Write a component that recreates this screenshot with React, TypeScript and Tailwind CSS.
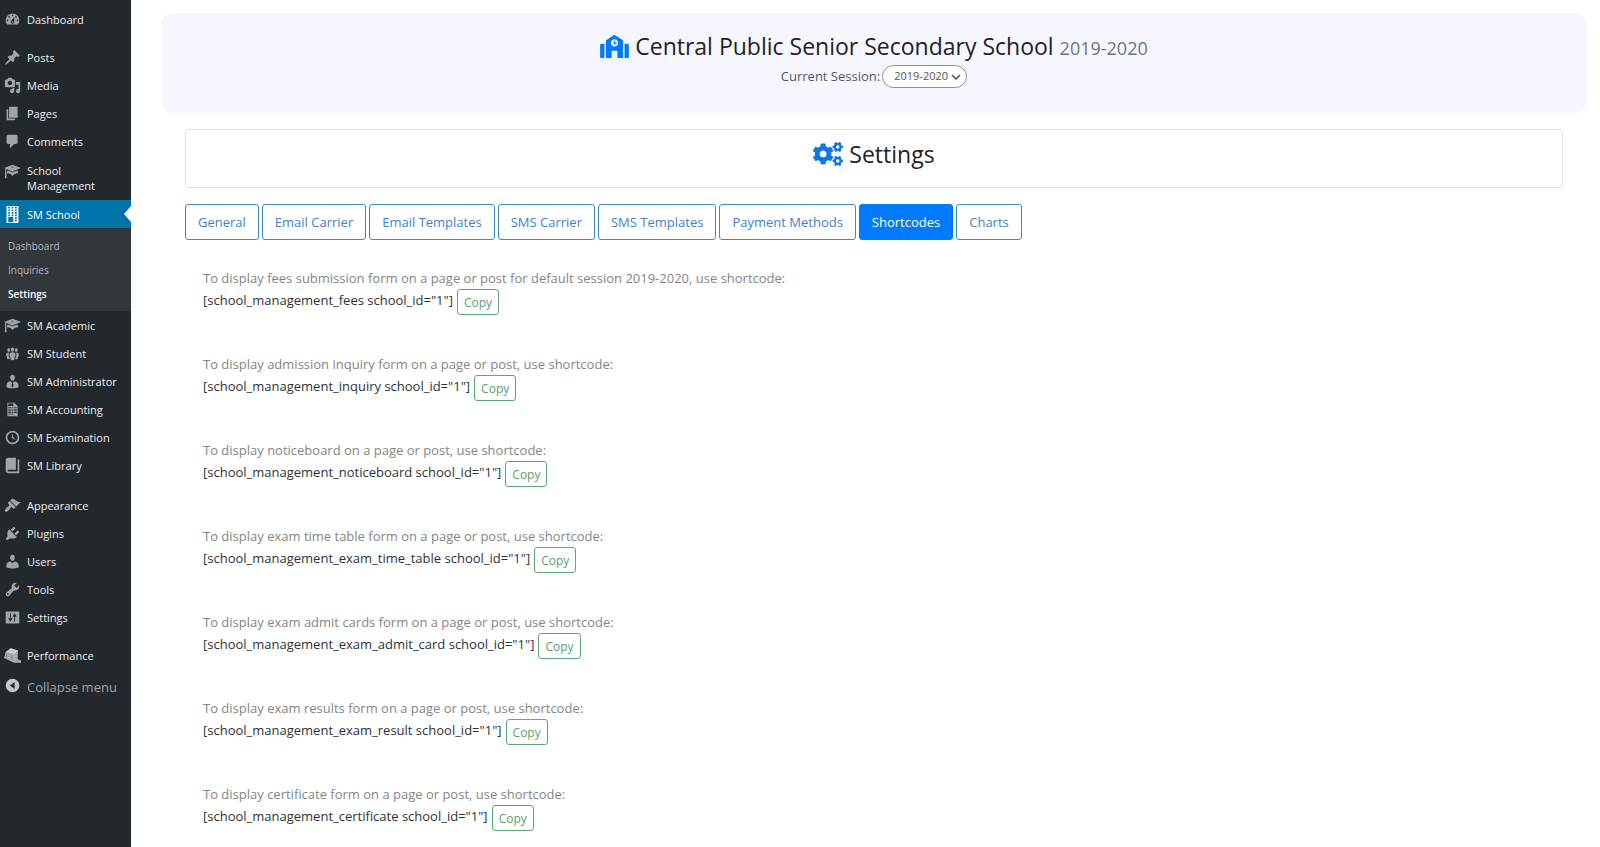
import { useState } from "react";
import { FaSchool, FaCogs } from "react-icons/fa";

type MenuItem = { label: string; icon: string };

// 20x20 admin menu glyphs
const icons: Record<string, string> = {
  dashboard:
    "M3.76 16h12.48c1.1-1.37 1.76-3.11 1.76-5 0-4.42-3.58-8-8-8s-8 3.58-8 8c0 1.89.66 3.63 1.76 5zM10 4c.55 0 1 .45 1 1s-.45 1-1 1-1-.45-1-1 .45-1 1-1zM6 6c.55 0 1 .45 1 1s-.45 1-1 1-1-.45-1-1 .45-1 1-1zm8 0c.55 0 1 .45 1 1s-.45 1-1 1-1-.45-1-1 .45-1 1-1zm-5.37 5.55L12 7v6c0 1.1-.9 2-2 2s-2-.9-2-2c0-.57.24-1.08.63-1.45zM4 10c.55 0 1 .45 1 1s-.45 1-1 1-1-.45-1-1 .45-1 1-1zm12 0c.55 0 1 .45 1 1s-.45 1-1 1-1-.45-1-1 .45-1 1-1zm-5 3c0-.55-.45-1-1-1s-1 .45-1 1 .45 1 1 1 1-.45 1-1z",
  post: "M10.44 3.02l1.82-1.82 6.36 6.35-1.83 1.82c-1.05-.68-2.48-.57-3.41.36l-.75.75c-.92.93-1.04 2.35-.35 3.41l-1.83 1.82-2.41-2.41-2.8 2.79c-.42.42-3.38 2.71-3.8 2.29s1.86-3.39 2.28-3.81l2.79-2.79L4.1 9.36l1.83-1.82c1.05.69 2.48.57 3.4-.36l.75-.75c.93-.92 1.05-2.35.36-3.41z",
  media:
    "M13 11V4c0-.55-.45-1-1-1h-1.67L9 1H5L3.67 3H2c-.55 0-1 .45-1 1v7c0 .55.45 1 1 1h10c.55 0 1-.45 1-1zM7 4.5c1.38 0 2.5 1.12 2.5 2.5S8.38 9.5 7 9.5 4.5 8.38 4.5 7 5.62 4.5 7 4.5zM14 6h5v10.5c0 1.38-1.12 2.5-2.5 2.5S14 17.88 14 16.5s1.12-2.5 2.5-2.5c.17 0 .34.02.5.05V9h-3V6zm-4 8.05V13h2v3.5c0 1.38-1.12 2.5-2.5 2.5S7 17.88 7 16.5 8.12 14 9.5 14c.17 0 .34.02.5.05z",
  page: "M6 15V2h10v13H6zm-1 1h8v2H3V5h2v11z",
  comments:
    "M5 2h9c1.1 0 2 .9 2 2v7c0 1.1-.9 2-2 2h-2l-5 5v-5H5c-1.1 0-2-.9-2-2V4c0-1.1.9-2 2-2z",
  learn:
    "M10 10L2.54 7.02 3 18H1l.48-11.41L0 6l10-4 10 4zm0-5c-.55 0-1 .22-1 .5s.45.5 1 .5 1-.22 1-.5-.45-.5-1-.5zm0 6l5.57-2.23c.71.94 1.2 2.07 1.36 3.3-.3-.04-.61-.07-.93-.07-2.55 0-4.78 1.37-6 3.41C8.78 13.37 6.55 12 4 12c-.32 0-.63.03-.93.07.16-1.23.65-2.36 1.36-3.3z",
  building:
    "M3 20h14V0H3v20zM7 3H5V1h2v2zm4 0H9V1h2v2zm4 0h-2V1h2v2zM7 6H5V4h2v2zm4 0H9V4h2v2zm4 0h-2V4h2v2zM7 9H5V7h2v2zm4 0H9V7h2v2zm4 0h-2V7h2v2zm-8 3H5v-2h2v2zm4 0H9v-2h2v2zm4 0h-2v-2h2v2zm-4 7H5v-6h6v6zm4-4h-2v-2h2v2zm0 3h-2v-2h2v2z",
  groups:
    "M8.03 4.46c-.29 1.28.55 3.46 1.97 3.46 1.41 0 2.25-2.18 1.96-3.46-.22-.98-1.08-1.63-1.96-1.63-.89 0-1.74.65-1.97 1.63zm-4.13.9c-.25 1.08.47 2.93 1.67 2.93s1.92-1.85 1.67-2.93c-.19-.83-.92-1.39-1.67-1.39s-1.48.56-1.67 1.39zm8.86 0c-.25 1.08.47 2.93 1.66 2.93 1.2 0 1.92-1.85 1.67-2.93-.19-.83-.92-1.39-1.67-1.39-.74 0-1.47.56-1.66 1.39zm-.59 11.43l1.25-4.3C14.2 10 12.71 8.47 10 8.47c-2.72 0-4.21 1.53-3.44 4.02l1.26 4.3C8.05 17.51 9 18 10 18c.98 0 1.94-.49 2.17-1.21zm-6.1-7.63c-.49.67-.96 1.83-.42 3.59l1.12 3.79c-.34.2-.77.31-1.2.31-.85 0-1.65-.41-1.85-1.03l-1.07-3.65c-.65-2.11.61-3.4 2.92-3.4.27 0 .54.02.79.06-.1.1-.2.22-.29.33zm8.35-.39c2.31 0 3.58 1.29 2.92 3.4l-1.07 3.65c-.2.62-1 1.03-1.85 1.03-.43 0-.86-.11-1.2-.31l1.11-3.77c.55-1.78.08-2.94-.42-3.61-.08-.11-.18-.23-.28-.33.25-.04.51-.06.79-.06z",
  businessman:
    "M7.3 6l-.03-.19c-.04-.37-.05-.73-.03-1.08.02-.36.1-.71.25-1.04.14-.32.31-.61.52-.86s.49-.46.83-.6c.34-.15.72-.23 1.13-.23.69 0 1.26.2 1.71.59s.76.87.91 1.44.18 1.16.09 1.78l-.03.19c-.01.09-.05.25-.11.48-.05.24-.12.47-.2.69-.08.21-.19.45-.34.72-.14.27-.3.49-.47.69-.18.19-.4.34-.67.48-.27.13-.55.19-.86.19s-.59-.06-.87-.19c-.26-.13-.49-.29-.67-.5-.18-.2-.34-.42-.49-.66-.15-.25-.26-.49-.34-.73-.09-.25-.16-.47-.21-.67-.06-.21-.1-.37-.12-.5zm9.2 6.24c.41.7.5 1.41.5 2.14v2.49c0 .03-.12.08-.29.13-.18.04-.42.13-.97.27-.55.12-1.1.24-1.65.34s-1.19.19-1.95.27c-.75.08-1.46.12-2.13.12-.68 0-1.39-.04-2.14-.12-.75-.07-1.4-.17-1.98-.27-.58-.11-1.08-.23-1.56-.34-.49-.11-.8-.21-1.06-.29L3 16.87v-2.49c0-.75.07-1.46.46-2.15s.81-1.25 1.5-1.68C5.66 10.12 7.19 10 8 10l1.67 1.67L9 13v3l1.02 1.08L11 16v-3l-.68-1.33L11.97 10c.77 0 2.2.07 2.9.52.71.45 1.21 1.02 1.63 1.72z",
  spreadsheet:
    "M12 2l4 4v12H4V2h8zm-1 4V3H5v3h6zM8 8V7H5v1h3zm3 0V7H9v1h2zm4 0V7h-3v1h3zm-7 2V9H5v1h3zm3 0V9H9v1h2zm4 0V9h-3v1h3zm-7 2v-1H5v1h3zm3 0v-1H9v1h2zm4 0v-1h-3v1h3zm-7 2v-1H5v1h3zm3 0v-1H9v1h2zm4 0v-1h-3v1h3zm-7 2v-1H5v1h3zm3 0v-1H9v1h2z",
  clock:
    "M10 2c4.42 0 8 3.58 8 8s-3.58 8-8 8-8-3.58-8-8 3.58-8 8-8zm0 14c3.31 0 6-2.69 6-6s-2.69-6-6-6-6 2.69-6 6 2.69 6 6 6zm-.71-5.29c.07.05.14.1.23.15l-.02.02L14 13l-3.03-3.19L10 5l-.97 4.81h.01c0 .02-.01.05-.02.09S9 9.97 9 10c0 .28.1.52.29.71z",
  book: "M16 3h2v16H5c-1.66 0-3-1.34-3-3V4c0-1.66 1.34-3 3-3h9v14H5c-.55 0-1 .45-1 1s.45 1 1 1h11V3z",
  appearance:
    "M14.48 11.06L7.41 3.99l1.5-1.5c.5-.56 2.3-.47 3.51.32 1.21.8 1.43 1.28 2.91 2.1 1.18.64 2.45 1.26 4.45.85zm-.71.71L6.7 4.7 4.93 6.47c-.39.39-.39 1.02 0 1.41l1.06 1.06c.39.39.39 1.03 0 1.42-.6.6-1.43 1.11-2.21 1.69-.35.26-.7.53-1.01.84C1.43 14.23.4 16.08 1.4 17.07c.99 1 2.84-.03 4.18-1.36.31-.31.58-.66.85-1.02.57-.78 1.08-1.61 1.69-2.21.39-.39 1.02-.39 1.41 0l1.06 1.06c.39.39 1.02.39 1.41 0z",
  plugins:
    "M13.11 4.36L9.87 7.6 8 5.73l3.24-3.24c.35-.34 1.05-.2 1.56.32.52.51.66 1.21.31 1.55zm-8 1.77l.91-1.12 9.01 9.01-1.19.84c-.71.71-2.63 1.16-3.82 1.16H6.14L4.9 17.26c-.59.59-1.54.59-2.12 0-.59-.58-.59-1.53 0-2.12l1.24-1.24v-3.88c0-1.13.4-3.19 1.09-3.89zm7.26 3.97l3.24-3.24c.34-.35 1.04-.21 1.55.31.52.51.66 1.21.31 1.55l-3.24 3.25z",
  users:
    "M10 9.25c-2.27 0-2.73-3.44-2.73-3.44C7 4.02 7.82 2 9.97 2c2.16 0 2.98 2.02 2.71 3.81 0 0-.41 3.44-2.68 3.44zm0 2.57L12.72 10c2.39 0 4.52 2.33 4.52 4.53v2.49s-3.65 1.13-7.24 1.13c-3.65 0-7.24-1.13-7.24-1.13v-2.49c0-2.25 1.94-4.48 4.47-4.48z",
  tools:
    "M16.68 9.77c-1.34 1.34-3.3 1.67-4.95.99l-5.41 6.52c-.99.99-2.59.99-3.58 0s-.99-2.59 0-3.57l6.52-5.42c-.68-1.65-.35-3.61.99-4.95 1.28-1.28 3.12-1.62 4.72-1.06l-2.89 2.89 2.82 2.82 2.86-2.87c.53 1.58.18 3.39-1.08 4.65zM3.81 16.21c.4.39 1.04.39 1.43 0 .4-.4.4-1.04 0-1.43-.39-.4-1.03-.4-1.43 0-.39.39-.39 1.03 0 1.43z",
  settings:
    "M18 17V3H2v14h16zM7 5h1v6h2l-2.500 4L5 11h2V5zM12 15h1V9h2l-2.500-4L10 9h2v6z",
  collapse:
    "M10 2a8 8 0 1 1 0 16a8 8 0 1 1 0-16zM12.500 6L7 10l5.500 4z",
};

const topItems: MenuItem[] = [{ label: "Dashboard", icon: "dashboard" }];

const contentItems: MenuItem[] = [
  { label: "Posts", icon: "post" },
  { label: "Media", icon: "media" },
  { label: "Pages", icon: "page" },
  { label: "Comments", icon: "comments" },
];

const smItems: MenuItem[] = [
  { label: "SM Academic", icon: "learn" },
  { label: "SM Student", icon: "groups" },
  { label: "SM Administrator", icon: "businessman" },
  { label: "SM Accounting", icon: "spreadsheet" },
  { label: "SM Examination", icon: "clock" },
  { label: "SM Library", icon: "book" },
];

const adminItems: MenuItem[] = [
  { label: "Appearance", icon: "appearance" },
  { label: "Plugins", icon: "plugins" },
  { label: "Users", icon: "users" },
  { label: "Tools", icon: "tools" },
  { label: "Settings", icon: "settings" },
];

const subItems = ["Dashboard", "Inquiries", "Settings"];

const tabs = [
  "General",
  "Email Carrier",
  "Email Templates",
  "SMS Carrier",
  "SMS Templates",
  "Payment Methods",
  "Shortcodes",
  "Charts",
];

const shortcodes = [
  {
    text: "To display fees submission form on a page or post for default session 2019-2020, use shortcode:",
    code: '[school_management_fees school_id="1"]',
  },
  {
    text: "To display admission inquiry form on a page or post, use shortcode:",
    code: '[school_management_inquiry school_id="1"]',
  },
  {
    text: "To display noticeboard on a page or post, use shortcode:",
    code: '[school_management_noticeboard school_id="1"]',
  },
  {
    text: "To display exam time table form on a page or post, use shortcode:",
    code: '[school_management_exam_time_table school_id="1"]',
  },
  {
    text: "To display exam admit cards form on a page or post, use shortcode:",
    code: '[school_management_exam_admit_card school_id="1"]',
  },
  {
    text: "To display exam results form on a page or post, use shortcode:",
    code: '[school_management_exam_result school_id="1"]',
  },
  {
    text: "To display certificate form on a page or post, use shortcode:",
    code: '[school_management_certificate school_id="1"]',
  },
];

function MenuIcon({ name }: { name: string }) {
  return (
    <svg
      viewBox="0 0 20 20"
      className="size-[17px] shrink-0"
      fill="currentColor"
      fillRule="evenodd"
      aria-hidden="true"
    >
      <path d={icons[name]} />
    </svg>
  );
}

// stacked cubes used by the cache plugin
function PerformanceIcon() {
  return (
    <svg viewBox="0 0 20 20" className="size-[17px] shrink-0" aria-hidden="true">
      <path d="M2 6L8 1.500L16.500 4L16 14.500L20 16v2.500L12 18.500L0 13z" fill="#a9adb1" />
      <path d="M2 6L8 1.500L16.500 4L12 8.500z" fill="#c9cccf" />
      <path d="M2.500 7.500l8 2.500-.8 5L1.500 12z" fill="#8d9297" />
      <path d="M4 9.500l4.500 1.400M3.700 11.600l4 1.400" stroke="#c9cccf" strokeWidth="1" />
    </svg>
  );
}

function MenuGroup({ items }: { items: MenuItem[] }) {
  return (
    <ul>
      {items.map((item) => (
        <li key={item.label}>
          <a href="#" className="flex h-7 items-center gap-1.5 pl-1 hover:text-[#00b9eb]">
            <span className="text-[#a0a5aa]">
              <MenuIcon name={item.icon} />
            </span>
            {item.label}
          </a>
        </li>
      ))}
    </ul>
  );
}

function Sidebar() {
  return (
    <nav className="w-[131px] shrink-0 bg-[#23282d] pt-[5px] text-[11px] leading-[15px] text-[#eee]">
      <MenuGroup items={topItems} />
      <div className="mt-2.5">
        <MenuGroup items={contentItems} />
      </div>
      <a href="#" className="flex h-[45px] items-start gap-1.5 pt-2 pl-1">
        <span className="text-[#a0a5aa]">
          <MenuIcon name="learn" />
        </span>
        <span>
          School
          <br />
          Management
        </span>
      </a>

      <a href="#" className="relative flex h-7 items-center gap-1.5 bg-[#0073aa] pl-1 text-white">
        <MenuIcon name="building" />
        SM School
        <span className="absolute top-1.5 right-0 border-y-8 border-r-[7px] border-y-transparent border-r-white" />
      </a>
      <ul className="bg-[#32373c] pt-1.5 pb-[5px] text-[10px]">
        {subItems.map((label) => (
          <li key={label}>
            <a
              href="#"
              className={
                label === "Settings"
                  ? "flex h-6 items-center pl-2 font-semibold text-white"
                  : "flex h-6 items-center pl-2 text-[#b4b9be]"
              }
            >
              {label}
            </a>
          </li>
        ))}
      </ul>

      <MenuGroup items={smItems} />
      <div className="mt-3">
        <MenuGroup items={adminItems} />
      </div>
      <a href="#" className="mt-2.5 flex h-7 items-center gap-1.5 pl-1">
        <PerformanceIcon />
        Performance
      </a>
      <button
        type="button"
        className="flex h-9 w-full items-center gap-1.5 pl-1 text-left text-[13px] text-[#a0a5aa]"
      >
        <span className="pb-1 text-[#c3c6c9]">
          <MenuIcon name="collapse" />
        </span>
        Collapse menu
      </button>
    </nav>
  );
}

export default function App() {
  const [activeTab, setActiveTab] = useState("Shortcodes");
  const [session, setSession] = useState("2019-2020");

  const handleCopy = (code: string) => {
    navigator.clipboard?.writeText(code);
  };

  return (
    <div className="flex min-h-screen bg-white font-['Open_Sans',sans-serif]">
      <Sidebar />

      <main className="min-w-0 flex-1 pt-[13px] pr-[13px] pl-[30px]">
        <header className="flex h-[100px] flex-col items-center rounded-xl bg-[#f6f7fe] pt-[17px]">
          <h1 className="flex items-center gap-1.5 text-[23px] leading-8 font-medium text-[#1d2327]">
            <FaSchool className="h-[23px] w-[29px] text-[#007bff]" />
            <span>
              Central Public Senior Secondary School{" "}
              <small className="text-lg font-normal text-[#6c757d]">{session}</small>
            </span>
          </h1>
          <div className="mt-[3px] flex items-center gap-0.5">
            <label htmlFor="session" className="text-[13px] text-[#50575e]">
              Current Session:
            </label>
            <div className="relative flex">
              <select
                id="session"
                value={session}
                onChange={(e) => setSession(e.target.value)}
                className="h-[23px] w-[85px] appearance-none rounded-full border border-[#8c8f94] bg-white pl-[11px] text-[11px] text-[#50575e]"
              >
                <option>2019-2020</option>
                <option>2020-2021</option>
              </select>
              <svg
                viewBox="0 0 10 6"
                className="pointer-events-none absolute top-[9px] right-1.5 h-1.5 w-2.5"
                fill="none"
                stroke="#50575e"
                strokeWidth="1.6"
                aria-hidden="true"
              >
                <path d="M1 1l4 4 4-4" />
              </svg>
            </div>
          </div>
        </header>

        <div className="px-6 pt-4">
          <div className="flex h-[59px] items-start justify-center rounded-[3px] border border-[#dfe1e3] pt-2">
            <h2 className="flex items-center gap-1.5 text-[23px] leading-8 font-medium text-[#1d2327]">
              <FaCogs className="h-6 w-[30px] text-[#0f78e6]" />
              Settings
            </h2>
          </div>

          <div className="mt-4 flex flex-wrap gap-[3px]" role="tablist">
            {tabs.map((tab) => (
              <button
                key={tab}
                type="button"
                role="tab"
                aria-selected={tab === activeTab}
                onClick={() => setActiveTab(tab)}
                className={
                  tab === activeTab
                    ? "h-9 rounded-[3px] border border-[#007bff] bg-[#007bff] px-3 pt-0.5 text-[13px] text-white"
                    : "h-9 rounded-[3px] border border-[#3f8bbd] px-3 pt-0.5 text-[13px] text-[#3f7fc8]"
                }
              >
                {tab}
              </button>
            ))}
          </div>

          <div className="mt-7 pl-[18px]">
            {shortcodes.map((item) => (
              <div key={item.code} className="mb-[39px] text-[13px] last:mb-0">
                <p className="leading-[21px] text-[#858585]">{item.text}</p>
                <div className="flex h-[26px] items-start gap-1">
                  <span className="leading-[23px] font-medium text-[#2c3338]">{item.code}</span>
                  <button
                    type="button"
                    onClick={() => handleCopy(item.code)}
                    className="h-[26px] rounded-[3px] border border-[#5fa878] px-1.5 pt-px text-[12px] text-[#5c9f68]"
                  >
                    Copy
                  </button>
                </div>
              </div>
            ))}
          </div>
        </div>
      </main>
    </div>
  );
}
